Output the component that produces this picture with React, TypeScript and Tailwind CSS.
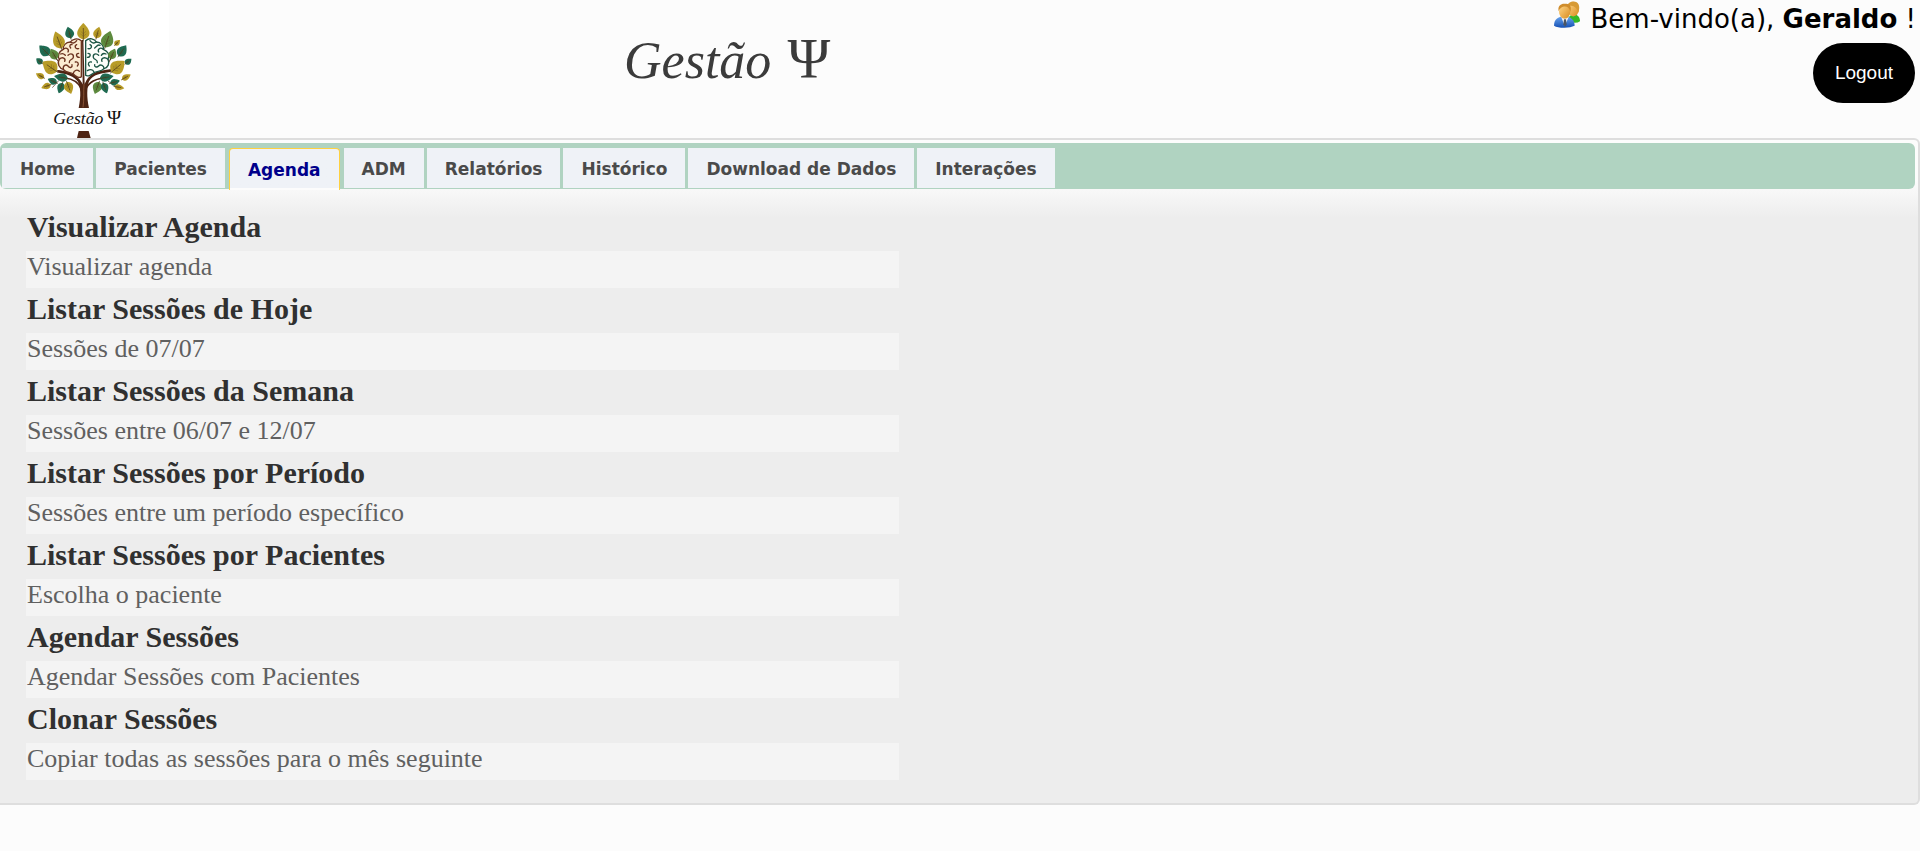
const tabs = ['Home', 'Pacientes', 'Agenda', 'ADM', 'Relatórios', 'Histórico', 'Download de Dados', 'Interações'];

const actions = [
  { title: 'Visualizar Agenda', text: 'Visualizar agenda' },
  { title: 'Listar Sessões de Hoje', text: 'Sessões de 07/07' },
  { title: 'Listar Sessões da Semana', text: 'Sessões entre 06/07 e 12/07' },
  { title: 'Listar Sessões por Período', text: 'Sessões entre um período específico' },
  { title: 'Listar Sessões por Pacientes', text: 'Escolha o paciente' },
  { title: 'Agendar Sessões', text: 'Agendar Sessões com Pacientes' },
  { title: 'Clonar Sessões', text: 'Copiar todas as sessões para o mês seguinte' },
];

const GOLD = '#b89c28';
const TEAL = '#1f6b52';
const GREEN = '#5d8a3e';

// x, y of the centre, length, width, rotation in degrees, colour
const leaves: [number, number, number, number, number, string][] = [
  [250, 94, 50, 36, 0, GOLD],
  [208, 98, 36, 26, -15, TEAL],
  [293, 98, 36, 24, 15, GOLD],
  [175, 120, 54, 34, -20, GOLD],
  [323, 118, 52, 36, 18, GREEN],
  [352, 128, 22, 16, 45, GOLD],
  [133, 151, 42, 30, -45, TEAL],
  [161, 162, 36, 26, -30, GREEN],
  [338, 162, 34, 24, 25, GREEN],
  [367, 152, 40, 28, 35, TEAL],
  [118, 183, 24, 18, -50, TEAL],
  [149, 200, 52, 40, -55, GOLD],
  [354, 200, 52, 40, 50, GOLD],
  [385, 184, 24, 18, 50, TEAL],
  [120, 227, 28, 18, -60, GOLD],
  [183, 232, 42, 24, -80, TEAL],
  [157, 243, 30, 19, -65, TEAL],
  [138, 259, 30, 19, -110, GOLD],
  [182, 264, 34, 22, 200, TEAL],
  [207, 264, 38, 27, 160, GOLD],
  [291, 264, 38, 27, 200, GREEN],
  [315, 264, 34, 22, 160, TEAL],
  [320, 232, 42, 24, 80, TEAL],
  [345, 246, 30, 19, 75, TEAL],
  [379, 231, 30, 18, 60, GOLD],
  [358, 262, 30, 17, 100, GOLD],
];

function TreeLogo() {
  return (
    <svg viewBox="0 0 507 414" className="h-[138px] w-[169px] shrink-0 bg-white" role="img" aria-label="Gestão Ψ">
      <g fill="none" stroke="#4e2413" strokeLinecap="round">
        <path d="M244 254 C232 228 210 218 176 214" strokeWidth="8" />
        <path d="M258 254 C268 224 292 216 330 212" strokeWidth="8" />
        <path d="M244 266 C232 242 216 236 196 234" strokeWidth="5" />
        <path d="M256 268 C270 242 288 238 308 234" strokeWidth="5" />
        <path d="M176 214 L160 207 M330 212 L344 206 M163 168 L178 188 M338 168 L324 190" strokeWidth="3" />
        <path d="M176 242 L158 262 M325 244 L350 260" strokeWidth="2" />
      </g>
      <path d="M236 324 C244 286 242 264 232 238 Q246 248 248 254 L246 120 L250 120 L254 252 Q262 240 268 236 C260 266 260 290 267 324 Z" fill="#4e2413" />
      <path d="M249 322 C253 296 250 276 252 252" fill="none" stroke="#a56a47" strokeWidth="2" />
      <path d="M244 122 C232 112 216 118 211 126 C197 126 188 138 190 148 C176 154 172 168 178 178 C170 190 178 205 190 208 C198 220 214 216 220 222 C228 232 240 234 244 230 Z" fill="#fbecd2" stroke="#6b3320" strokeWidth="4" />
      <path d="M257 122 C268 112 284 116 289 126 C303 126 312 138 310 148 C325 154 330 166 324 178 C330 190 324 203 312 206 C304 216 290 212 282 218 C272 226 262 230 257 226 Z" fill="#fdfefa" stroke="#1d5544" strokeWidth="4" />
      <g fill="none" stroke="#6b3320" strokeWidth="4" strokeLinecap="round">
        <path d="M211 126 C218 132 226 128 230 122 M230 134 C222 138 226 148 236 146 M190 148 C200 140 208 148 204 156 M212 144 C206 136 212 132 216 134 M178 178 C188 168 198 176 194 184 M204 166 C212 158 222 162 220 172 C218 180 206 178 208 188 M236 160 C226 160 228 172 238 172 M190 208 C188 196 198 192 204 198 C210 206 218 202 216 194 M226 186 C234 184 238 192 232 198 M220 220 C222 210 232 208 238 214 M182 162 C190 158 194 164 196 166" />
      </g>
      <g fill="none" stroke="#1d5544" strokeWidth="4" strokeLinecap="round">
        <path d="M289 126 C282 132 274 128 270 122 M270 134 C278 138 274 148 264 146 M310 148 C300 140 292 148 296 156 M284 144 C292 138 294 132 300 136 M324 178 C312 168 302 176 306 184 M296 166 C288 158 278 162 280 172 C282 180 294 178 292 188 M264 160 C274 160 272 172 262 172 M312 206 C312 196 302 192 296 198 C290 204 282 200 284 194 M274 186 C266 184 262 192 268 198 M282 216 C278 206 268 208 262 212 M318 162 C310 158 306 162 304 166" />
      </g>
      {leaves.map(([x, y, length, width, angle, color]) => (
        <g key={`${x}-${y}`} transform={`translate(${x} ${y}) rotate(${angle})`}>
          <path
            d={`M0 ${-length / 2} C${width * 0.35} ${-length * 0.25} ${width * 0.95} ${length * 0.25} 0 ${length / 2} C${-width * 0.95} ${length * 0.25} ${-width * 0.35} ${-length * 0.25} 0 ${-length / 2} Z`}
            fill={color}
          />
          <path d={`M0 ${-length * 0.2} V${length * 0.6}`} stroke="#4e3a1a" strokeWidth="2" />
          <path
            d={`M${-width * 0.22} 0 L0 ${length * 0.15} L${width * 0.22} 0 M${-width * 0.25} ${length * 0.15} L0 ${length * 0.3} L${width * 0.25} ${length * 0.15}`}
            fill="none"
            stroke="#4e3a1a"
            strokeOpacity="0.5"
            strokeWidth="1.5"
          />
        </g>
      ))}
      <path d="M236 393 H266 L272 414 H231 Z" fill="#4e2413" />
      <text x="160" y="373" fontSize="53" fontStyle="italic" fill="#111" fontFamily="'Liberation Serif', serif">
        Gestão
      </text>
      <text x="321" y="373" fontSize="58" fill="#111" fontFamily="'Liberation Serif', serif">
        Ψ
      </text>
    </svg>
  );
}

function UsersIcon() {
  return (
    <svg viewBox="0 0 78 80" className="mt-px h-[27px] w-[26px]" aria-hidden="true">
      <defs>
        <linearGradient id="face" x1="0" y1="0" x2="1" y2="1">
          <stop offset="0" stopColor="#ffd98c" />
          <stop offset="1" stopColor="#d98a1c" />
        </linearGradient>
        <linearGradient id="suit" x1="0" y1="0" x2="0" y2="1">
          <stop offset="0" stopColor="#6aa5ee" />
          <stop offset="1" stopColor="#1550b4" />
        </linearGradient>
      </defs>
      <path d="M42 60 C42 44 52 40 60 40 C72 40 78 50 78 60 Q70 66 56 64 Z" fill="#35b827" />
      <ellipse cx="58" cy="24" rx="17" ry="22" fill="url(#face)" />
      <path d="M40 20 C38 2 58 -2 68 3 C78 8 77 26 72 34 C70 22 60 12 48 14 Z" fill="#d79a35" />
      <path d="M0 74 C0 54 12 46 30 46 C50 46 62 56 62 74 Q50 80 31 80 Q10 80 0 74 Z" fill="url(#suit)" />
      <path d="M22 48 L32 74 L44 48 Z" fill="#f3f6fb" />
      <path d="M30 54 L36 54 L38 70 L33 77 L28 70 Z" fill="#4b5563" />
      <ellipse cx="32" cy="32" rx="17" ry="21" fill="url(#face)" />
      <path d="M14 30 C10 12 24 6 34 8 C48 6 54 18 49 32 C46 20 40 15 30 16 C22 17 18 22 14 30 Z" fill="#d08d2c" />
    </svg>
  );
}

export default function App() {
  return (
    <div className="min-h-screen bg-[#fcfcfc]">
      <header className="flex h-[138px] items-start">
        <div className="flex-1">
          <TreeLogo />
        </div>
        <h1 className="flex items-baseline gap-4 pt-6 font-['Liberation_Serif',serif] leading-[70px] text-[#3b3b3b]">
          <span className="text-[52px] italic">Gestão</span>
          <span className="text-[58px]">Ψ</span>
        </h1>
        <div className="flex flex-[1.74] flex-col items-end pr-1 font-['DejaVu_Sans',sans-serif] text-black">
          <div className="flex gap-2.5 text-[26px] leading-[38px]">
            <UsersIcon />
            <p>
              Bem-vindo(a), <b>Geraldo</b> !
            </p>
          </div>
          <button
            type="button"
            className="mt-[5px] mr-px h-[60px] rounded-[30px] bg-black px-[22px] font-['Liberation_Sans',sans-serif] text-[19px] text-white"
          >
            Logout
          </button>
        </div>
      </header>

      <main className="rounded-md rounded-l-none border-2 border-l-0 border-[#dedede] bg-[linear-gradient(#fcfcfc_40px,#ededed_78px)] pt-[3px] pb-[23px]">
        <nav className="mr-[3px] flex h-[46px] items-start gap-[3px] rounded-md bg-[#b0d3c1] px-0.5 pt-[5px] font-['DejaVu_Sans',sans-serif] text-[17px] font-bold text-[#4a4a4a]">
          {tabs.map((tab) =>
            tab === 'Agenda' ? (
              <a
                key={tab}
                href="#agenda"
                aria-current="page"
                className="mx-px flex h-[42px] items-center rounded-t border border-b-0 border-[#ffd040] bg-linear-to-b from-[#eff2f7] from-95% to-[#fcfcfc] to-95% px-[18px] pt-0.5 text-[#00008b]"
              >
                {tab}
              </a>
            ) : (
              <a key={tab} href="#" className="flex h-10 items-center bg-[#eff2f7] px-[18px] pt-[3px]">
                {tab}
              </a>
            ),
          )}
        </nav>

        <section className="mt-[17px] ml-[26px] w-[873px] max-w-full font-['Liberation_Serif',serif]">
          {actions.map((action) => (
            <a key={action.title} href="#" className="block">
              <h2 className="h-[45px] pl-px text-[30px] leading-[41px] font-bold text-[#303030]">{action.title}</h2>
              <p className="h-[37px] bg-[#f4f4f4] pl-px text-[26px] leading-[31px] text-[#606060]">{action.text}</p>
            </a>
          ))}
        </section>
      </main>
    </div>
  );
}
